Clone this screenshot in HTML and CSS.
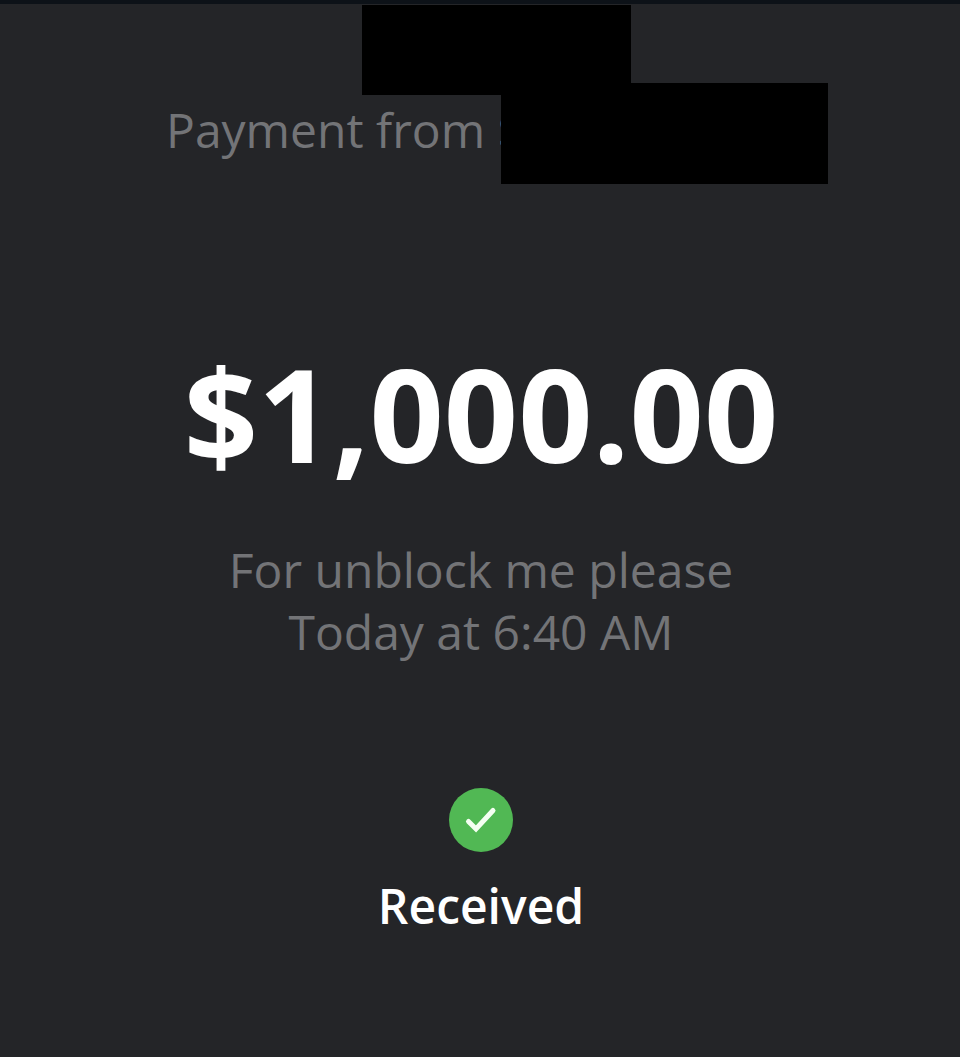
FILE: index.html
```html
<!DOCTYPE html>
<html lang="en">
<head>
<meta charset="utf-8">
<meta name="viewport" content="width=device-width, initial-scale=1">
<title>Payment</title>
<link rel="stylesheet" href="styles.css">
</head>
<body>
<main class="receipt">
  <header class="sender">
    <p class="sender-text">Payment from $</p>
    <span class="redaction redaction-name" aria-hidden="true"></span>
    <span class="redaction redaction-tag" aria-hidden="true"></span>
  </header>
  <h1 class="amount">$1,000.00</h1>
  <div class="details">
    <p>For unblock me please</p>
    <p>Today at 6:40 AM</p>
  </div>
  <div class="status">
    <svg class="status-icon" viewBox="0 0 64 64" aria-hidden="true">
      <circle cx="32" cy="32" r="32" fill="#51b854"/>
      <path d="M19.500 33.500 L27 41 L44 22.500" fill="none" stroke="#f4fff2" stroke-width="5" stroke-linecap="round" stroke-linejoin="miter"/>
    </svg>
    <p class="status-text">Received</p>
  </div>
</main>
</body>
</html>
```

FILE: styles.css
```css
* {
  box-sizing: border-box;
}

body {
  margin: 0;
  background: #242528;
  font-family: "Open Sans", "Noto Sans", sans-serif;
}

p,
h1 {
  margin: 0;
}

.receipt {
  min-height: 100vh;
  padding-left: 2px;
  border-top: 4px solid #0d1218;
  text-align: center;
  color: #fff;
}

.sender {
  position: relative;
  width: 630px;
  max-width: 100%;
  margin: 0 auto;
  padding-top: 95px;
  text-align: left;
  font-size: 48px;
  line-height: 62px;
  color: #737477;
}

.redaction {
  position: absolute;
  background: #000;
}

.redaction-name {
  left: 196px;
  top: 1px;
  width: 269px;
  height: 90px;
}

.redaction-tag {
  left: 335px;
  top: 79px;
  width: 327px;
  height: 101px;
}

.amount {
  margin-top: 172px;
  font-size: 130px;
  line-height: 160px;
  font-weight: 700;
}

.details {
  margin-top: 46px;
  font-size: 48px;
  line-height: 62px;
  color: #737477;
}

.status {
  display: flex;
  flex-direction: column;
  align-items: center;
  margin-top: 125px;
}

.status-icon {
  width: 64px;
  height: 64px;
}

.status-text {
  margin-top: 23px;
  font-size: 48px;
  line-height: 62px;
  font-weight: 600;
}
```
